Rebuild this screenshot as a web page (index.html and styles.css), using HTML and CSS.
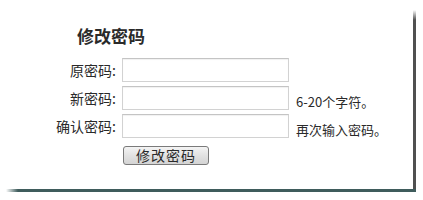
FILE: index.html
```html
<!DOCTYPE html>
<html lang="zh-CN">
<head>
<meta charset="utf-8">
<title>修改密码</title>
<link rel="stylesheet" href="styles.css">
</head>
<body>
<div class="card">
  <h1 class="title">修改密码</h1>
  <form class="form">
    <label class="label" for="old">原密码:</label>
    <input class="field" id="old" type="password">
    <span class="hint"></span>

    <label class="label" for="new">新密码:</label>
    <input class="field" id="new" type="password">
    <span class="hint">6-20个字符。</span>

    <label class="label" for="again">确认密码:</label>
    <input class="field" id="again" type="password">
    <span class="hint">再次输入密码。</span>

    <span class="label"></span>
    <div class="actions"><button class="btn" type="button">修改密码</button></div>
    <span class="hint"></span>
  </form>
</div>
</body>
</html>
```
FILE: styles.css
```css
html, body {
  margin: 0;
  padding: 0;
  background: #fff;
}
body {
  width: 423px;
  height: 200px;
  font-family: "Noto Sans CJK SC", "Noto Sans", sans-serif;
  color: #2a2a2a;
}
.card {
  box-sizing: border-box;
  width: 416px;
  height: 192px;
  padding-top: 25px;
  background:
    linear-gradient(to right, rgba(61,92,92,0) 6px, #3f5c5c 18px, #3f5c5c 100%) left bottom / 100% 3px no-repeat,
    linear-gradient(to bottom, rgba(80,80,80,0) 10px, #505050 20px, #505050 100%) right top / 3px 100% no-repeat,
    #fff;
}
.title {
  margin: 0 0 11px 77px;
  font-size: 17px;
  line-height: 22px;
  font-weight: bold;
  color: #2a2a2a;
}
.form {
  display: grid;
  grid-template-columns: 118px 167px auto;
  row-gap: 4px;
  margin: 0;
}
.label {
  font-size: 14px;
  line-height: 24px;
  text-align: right;
  padding-right: 2px;
  color: #2a2a2a;
  white-space: nowrap;
}
.field {
  box-sizing: border-box;
  width: 167px;
  height: 24px;
  margin: 0 0 0 4px;
  border: 1px solid #d2d2d2;
  border-top-color: #c4c4c4;
  box-shadow: inset 0 1px 1px rgba(0,0,0,0.06);
  background: #fff;
  padding: 0 4px;
}
.hint {
  align-self: end;
  margin-left: 11px;
  font-size: 13px;
  line-height: 16px;
  color: #2a2a2a;
  white-space: nowrap;
}
.actions {
  padding-left: 5px;
}
.btn {
  box-sizing: border-box;
  width: 86px;
  height: 19px;
  padding: 0;
  border: 1px solid #7a7a7a;
  border-radius: 3px;
  background: linear-gradient(to bottom, #f4f4f4 0%, #e2e2e2 50%, #d4d4d4 100%);
  font-family: "Noto Sans CJK SC", sans-serif;
  font-size: 14px;
  line-height: 17px;
  letter-spacing: 1px;
  color: #2a2a2a;
}
```
